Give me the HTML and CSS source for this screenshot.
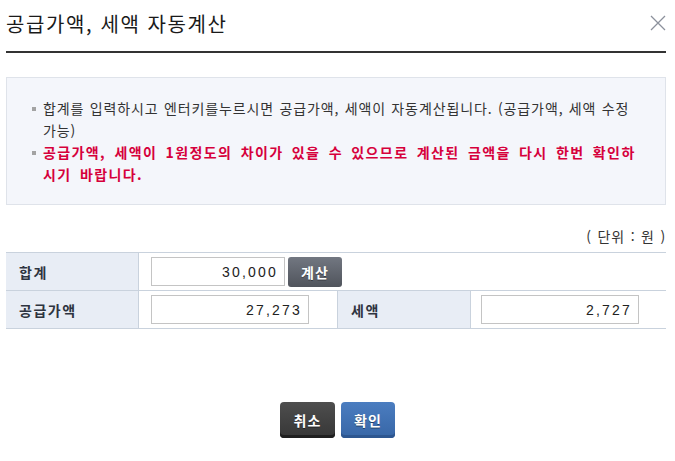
FILE: index.html
```html
<!DOCTYPE html>
<html lang="ko">
<head>
<meta charset="utf-8">
<title>공급가액, 세액 자동계산</title>
<link rel="stylesheet" href="styles.css">
</head>
<body>
<div class="dialog">
  <header class="dlg-head">
    <h1 class="dlg-title">공급가액, 세액 자동계산</h1>
    <button class="dlg-close" type="button" aria-label="닫기">
      <svg width="16" height="16" viewBox="0 0 16 16"><path d="M1 1 L15 15 M15 1 L1 15" stroke="#8c919c" stroke-width="1.3" fill="none"/></svg>
    </button>
  </header>

  <div class="notice">
    <ul class="notice-list">
      <li class="notice-item">합계를 입력하시고 엔터키를누르시면 공급가액, 세액이 자동계산됩니다. (공급가액, 세액 수정 가능)</li>
      <li class="notice-item notice-warn">공급가액, 세액이 1원정도의 차이가 있을 수 있으므로 계산된 금액을 다시 한번 확인하시기 바랍니다.</li>
    </ul>
  </div>

  <p class="unit">( 단위 : 원 )</p>

  <div class="calc-table">
    <div class="cell label">합계</div>
    <div class="cell value span3">
      <input class="num-input w-sum" type="text" value="30,000">
      <button class="btn-calc" type="button">계산</button>
    </div>
    <div class="cell label">공급가액</div>
    <div class="cell value bordered">
      <input class="num-input w-part" type="text" value="27,273">
    </div>
    <div class="cell label">세액</div>
    <div class="cell value last">
      <input class="num-input w-part" type="text" value="2,727">
    </div>
  </div>

  <div class="actions">
    <button class="btn btn-cancel" type="button">취소</button>
    <button class="btn btn-ok" type="button">확인</button>
  </div>
</div>
</body>
</html>
```

FILE: styles.css
```css
* { box-sizing: border-box; }

html, body {
  margin: 0;
  padding: 0;
  background: #ffffff;
}

body {
  font-family: "Noto Sans CJK KR", "Noto Sans", sans-serif;
  color: #333;
}

.dialog {
  width: 660px;
  margin-left: 6px;
}

.dlg-head {
  display: flex;
  justify-content: space-between;
  align-items: flex-start;
  padding-top: 9px;
  padding-bottom: 13px;
  border-bottom: 2px solid #333;
  height: 53px;
}

.dlg-title {
  margin: 0;
  font-size: 20px;
  font-weight: 400;
  line-height: 29px;
  color: #1a1a1a;
  letter-spacing: 1.6px;
}

.dlg-close {
  border: 0;
  background: none;
  padding: 0;
  margin-top: 6px;
  width: 16px;
  height: 16px;
  display: block;
}
.dlg-close svg { display: block; }

.notice {
  margin-top: 24px;
  height: 128px;
  border: 1px solid #dfe3ea;
  background: #f4f6fb;
  padding: 19px 25px 0 24px;
}

.notice-list {
  list-style: none;
  margin: 0;
  padding: 0;
}

.notice-item {
  position: relative;
  padding-left: 12px;
  font-size: 14px;
  line-height: 22px;
  letter-spacing: 0.9px;
  word-spacing: 0.5px;
  color: #333;
}

.notice-item::before {
  content: "";
  position: absolute;
  left: 1px;
  top: 10px;
  width: 4px;
  height: 4px;
  background: #a3a3a3;
}

.notice-warn {
  color: #d6003b;
  font-weight: 700;
  word-spacing: 3px;
  letter-spacing: 1.4px;
}

.unit {
  margin: 21px 0 6px;
  text-align: right;
  font-size: 14px;
  line-height: 20px;
  letter-spacing: 0.8px;
  word-spacing: 1px;
  color: #333;
}

.calc-table {
  display: grid;
  grid-template-columns: 133px 199px 133px 1fr;
  border-top: 1px solid #c9d2dd;
}

.cell {
  height: 38px;
  border-bottom: 1px solid #c9d2dd;
  display: flex;
  align-items: center;
}

.label {
  background: #e8edf5;
  border-right: 1px solid #c9d2dd;
  padding-left: 13px;
  font-size: 14px;
  font-weight: 700;
  letter-spacing: 1.5px;
  color: #2e3440;
}

.value {
  padding-left: 12px;
  gap: 3px;
}

.span3 { grid-column: span 3; }

.bordered { border-right: 1px solid #c9d2dd; }

.last { padding-left: 10px; }

.num-input {
  height: 29px;
  border: 1px solid #c4c4c4;
  background: #fff;
  padding: 0 6px 0 4px;
  text-align: right;
  font-family: "Liberation Sans", Arial, sans-serif;
  font-size: 14px;
  letter-spacing: 2.2px;
  color: #222;
  outline: none;
}

.w-sum { width: 134px; }
.w-part { width: 158px; }

.btn-calc {
  width: 54px;
  height: 30px;
  border: 0;
  border-radius: 3px;
  background: linear-gradient(#727781, #50545c);
  color: #fff;
  font-family: "Noto Sans CJK KR", sans-serif;
  font-size: 14px;
  font-weight: 700;
  letter-spacing: 1px;
  padding: 0;
  text-shadow: 0 1px 0 rgba(0,0,0,0.4);
}

.actions {
  display: flex;
  justify-content: center;
  gap: 6px;
  margin-top: 73px;
  padding-left: 3px;
}

.btn {
  height: 36px;
  border: 0;
  border-radius: 4px;
  color: #fff;
  font-family: "Noto Sans CJK KR", sans-serif;
  font-size: 14px;
  font-weight: 700;
  letter-spacing: 1px;
  padding: 0;
  text-shadow: 0 1px 0 rgba(0,0,0,0.45);
}

.btn-cancel {
  width: 55px;
  background: linear-gradient(#4e4e4e, #363636);
  box-shadow: inset 0 -3px 0 #1f1f1f;
}

.btn-ok {
  width: 54px;
  background: linear-gradient(#4b7dc0, #3766a6);
  box-shadow: inset 0 -3px 0 #2d5690;
}
```
